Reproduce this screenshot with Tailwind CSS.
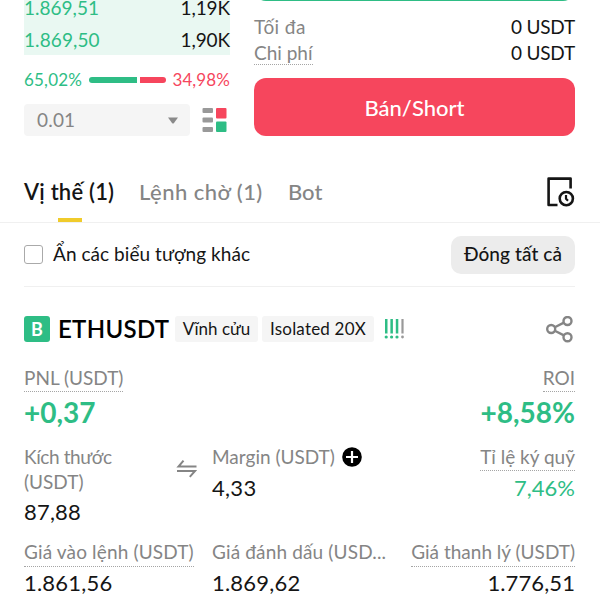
<!DOCTYPE html>
<html lang="vi">
<head>
  <meta charset="UTF-8" />
  <meta name="viewport" content="width=device-width, initial-scale=1" />
  <title>ETHUSDT</title>
  <script src="https://cdn.jsdelivr.net/npm/@tailwindcss/browser@4"></script>
</head>
<body class="bg-white text-[#151515] font-['Lato','Noto_Sans',sans-serif] w-[600px] h-[600px] overflow-hidden">

  <!-- Order book + order form -->
  <section class="flex justify-between h-[136px] pl-6 pr-[25px]">
    <div class="w-[206px] flex flex-col">
      <div class="h-[55px] bg-[#e9f8f2] text-[19px] shrink-0">
        <div class="h-[15px] leading-[15px] flex items-center justify-between">
          <span class="text-[#2ebd85]">1.869,51</span><span class="tracking-[-0.1px]">1,19K</span>
        </div>
        <div class="mt-[9px] h-[33px] flex items-center justify-between">
          <span class="text-[#2ebd85] tracking-[0.1px]">1.869,50</span><span class="tracking-[-0.1px]">1,90K</span>
        </div>
      </div>
      <div class="h-[49px] flex items-center justify-between text-[17px]">
        <span class="text-[#2ebd85] tracking-[0.2px]">65,02%</span>
        <div class="w-[77px] h-[6px] flex gap-[3px]">
          <div class="w-[48px] bg-[#2ebd85] rounded-l-full"></div>
          <div class="flex-1 bg-[#f6465d] rounded-r-full"></div>
        </div>
        <span class="text-[#f6465d] tracking-[0.1px]">34,98%</span>
      </div>
      <div class="flex items-center">
        <div class="w-[166px] h-8 bg-[#f5f5f5] rounded-[4px] flex items-center justify-between pl-[13px] pr-3 text-[19px] text-[#858585]">
          <span class="tracking-[0.2px]">0.01</span>
          <svg class="w-[10px] h-[7px]" viewBox="0 0 10 7"><path d="M0 0.5h10L6 6q-1 1-2 0z" fill="#8a8a8a" /></svg>
        </div>
        <svg class="ml-3 w-[25px] h-[26px]" viewBox="0 0 25 26">
          <g fill="#999">
            <rect x="0.5" y="1" width="10.5" height="5" rx="1" />
            <rect x="0.5" y="10.5" width="10.5" height="5" rx="1" />
            <rect x="0.5" y="20" width="10.5" height="5" rx="1" />
          </g>
          <rect x="14" y="1" width="10.5" height="10.5" rx="1" fill="#f6465d" />
          <rect x="14" y="14.5" width="10.5" height="10.5" rx="1" fill="#2ebd85" />
        </svg>
      </div>
    </div>

    <div class="w-[321px] flex flex-col text-[19px]">
      <div class="h-[14px] -mt-[13px] bg-[#2ebd85] rounded-b-xl shrink-0"></div>
      <div class="mt-[14px] h-[25px] flex items-center justify-between shrink-0">
        <span class="text-[#858585] tracking-[0.4px]">Tối đa</span><span class="tracking-[-0.2px]">0 USDT</span>
      </div>
      <div class="h-[26px] flex items-center justify-between shrink-0">
        <span class="text-[#858585] h-[23px] leading-[21px] border-b border-dotted border-[#a5a5a5]">Chi phí</span><span class="tracking-[-0.2px]">0 USDT</span>
      </div>
      <button class="mt-auto h-[58px] rounded-xl bg-[#f6465d] text-white text-[22px] font-medium shrink-0">Bán/Short</button>
    </div>
  </section>

  <!-- Tabs -->
  <nav class="mt-[27px] h-[60px] border-b border-[#f0f0f0] pl-6 pr-[25px] flex justify-between text-[22px] font-medium text-[#858585]">
    <div class="flex">
      <div class="w-[115px] flex flex-col justify-between">
        <span class="leading-[58px] h-[54px] whitespace-nowrap text-[#151515] font-semibold tracking-[0.2px]">Vị thế (1)</span>
        <div class="w-6 h-1 bg-[#f0cb2b] ml-[34px]"></div>
      </div>
      <span class="leading-[58px] w-[149px] whitespace-nowrap tracking-[0.45px]">Lệnh chờ (1)</span>
      <span class="leading-[58px]">Bot</span>
    </div>
    <svg class="mt-[13px] w-7 h-8" viewBox="0 0 28 32" fill="none" stroke="#151515" stroke-width="2.6" stroke-linejoin="round">
      <path d="M23.6 12.5V2.6H1.6V29H10.5" />
      <circle cx="19.3" cy="22.6" r="6.6" />
      <path d="M19 19v3.8l2 2" stroke-width="2.2" />
    </svg>
  </nav>

  <!-- Filter row -->
  <div class="ml-6 mr-[25px] h-16 border-b border-[#f0f0f0] flex items-center justify-between text-[19px]">
    <div class="flex items-center">
      <div class="w-[19px] h-[19px] border-[1.5px] border-[#aaa] rounded-[3px]"></div>
      <span class="ml-[10px] tracking-[0.05px]">Ẩn các biểu tượng khác</span>
    </div>
    <button class="w-[124px] h-[38px] rounded-[10px] bg-[#ececec] font-medium tracking-[0.1px] whitespace-nowrap">Đóng tất cả</button>
  </div>

  <!-- Position -->
  <section class="ml-6 mr-[25px]">
    <div class="mt-[29px] h-[26px] flex items-center">
      <div class="w-[26px] h-[26px] rounded-[3px] bg-[#2ebd85] text-white text-[18px] font-bold flex items-center justify-center">B</div>
      <h2 class="ml-2 w-[117px] text-[24px] font-semibold tracking-[0.3px] whitespace-nowrap text-black">ETHUSDT</h2>
      <span class="w-[83px] h-[26px] rounded-[3px] bg-[#f5f5f5] text-[17px] leading-[26px] text-center whitespace-nowrap">Vĩnh cửu</span>
      <span class="ml-1 w-[112px] h-[26px] rounded-[3px] bg-[#f5f5f5] text-[17px] leading-[26px] tracking-[0.2px] text-center whitespace-nowrap">Isolated 20X</span>
      <svg class="ml-[10px] w-[21px] h-5" viewBox="0 0 21 20" fill="#2ebd85">
        <path d="M1 0h2.5v14.5H1zM6.4 0h2.5v14.5H6.4zM11.8 0h2.5v14.5h-2.5z" />
        <circle cx="2.2" cy="18" r="1.6" /><circle cx="7.6" cy="18" r="1.6" /><circle cx="13" cy="18" r="1.6" />
        <path d="M17.4 0h2.2v14.5h-2.2z" fill="#999" /><circle cx="18.5" cy="18" r="1.4" fill="#999" />
      </svg>
      <svg class="ml-auto mr-[2px] w-[27px] h-[27px]" viewBox="0 0 27 27" fill="none" stroke="#858585" stroke-width="2.4">
        <circle cx="5.2" cy="13" r="4" /><circle cx="21.5" cy="5" r="4" /><circle cx="21.5" cy="21.3" r="4" />
        <path d="M8.8 11.2l9.1-4.6M8.8 14.8l9.1 4.6" />
      </svg>
    </div>

    <div class="mt-[25px] flex justify-between text-[19px] text-[#858585]">
      <div class="flex flex-col items-start">
        <span class="h-[25px] leading-[22px] border-b border-dotted border-[#a5a5a5]">PNL (USDT)</span>
        <span class="mt-[2px] text-[28px] leading-9 font-bold text-[#2ebd85]">+0,37</span>
      </div>
      <div class="flex flex-col items-end">
        <span class="h-[25px] leading-[22px] border-b border-dotted border-[#a5a5a5]">ROI</span>
        <span class="mt-[2px] text-[28px] leading-9 font-bold text-[#2ebd85]">+8,58%</span>
      </div>
    </div>

    <div class="mt-[14px] h-[95px] flex text-[19px] leading-[25px] text-[#858585]">
      <div class="w-[152px] flex flex-col">
        <span><span class="tracking-[-0.4px]">Kích thước</span><br />(USDT)</span>
        <span class="mt-[2px] text-[22px] leading-8 text-[#151515] tracking-[0.2px]">87,88</span>
      </div>
      <svg class="mt-[15px] w-[21px] h-[19px]" viewBox="0 0 21 19" fill="none" stroke="#858585" stroke-width="2">
        <path d="M20.5 7.6H2.5L7.5 1.6M1 12H19L13.8 17.8" />
      </svg>
      <div class="ml-[15px] flex flex-col">
        <div class="flex items-center">
          <span>Margin (USDT)</span>
          <svg class="ml-[7px] w-5 h-5" viewBox="0 0 20 20"><circle cx="10" cy="10" r="9.8" fill="#000" /><path d="M4 10h12M10 4v12" stroke="#fff" stroke-width="2.2" /></svg>
        </div>
        <span class="mt-[3px] text-[22px] leading-8 text-[#151515] tracking-[0.3px]">4,33</span>
      </div>
      <div class="ml-auto flex flex-col items-end">
        <span class="h-[27px] border-b border-dotted border-[#a5a5a5]">Tỉ lệ ký quỹ</span>
        <span class="mt-px text-[22px] leading-8 text-[#2ebd85]">7,46%</span>
      </div>
    </div>

    <div class="flex justify-between text-[19px] leading-[25px] text-[#858585]">
      <div class="w-[188px] flex flex-col items-start">
        <span class="h-[28px] border-b border-dotted border-[#a5a5a5] tracking-[0.15px] whitespace-nowrap">Giá vào lệnh (USDT)</span>
        <span class="text-[22px] leading-8 text-[#151515] tracking-[0.2px]">1.861,56</span>
      </div>
      <div class="w-[176px] flex flex-col items-start">
        <span class="h-[28px] tracking-[0.15px] whitespace-nowrap">Giá đánh dấu (USD...</span>
        <span class="text-[22px] leading-8 text-[#151515] tracking-[0.2px]">1.869,62</span>
      </div>
      <div class="flex-1 flex flex-col items-end">
        <span class="h-[28px] border-b border-dotted border-[#a5a5a5] whitespace-nowrap">Giá thanh lý (USDT)</span>
        <span class="text-[22px] leading-8 text-[#151515] tracking-[0.1px]">1.776,51</span>
      </div>
    </div>
  </section>

</body>
</html>
